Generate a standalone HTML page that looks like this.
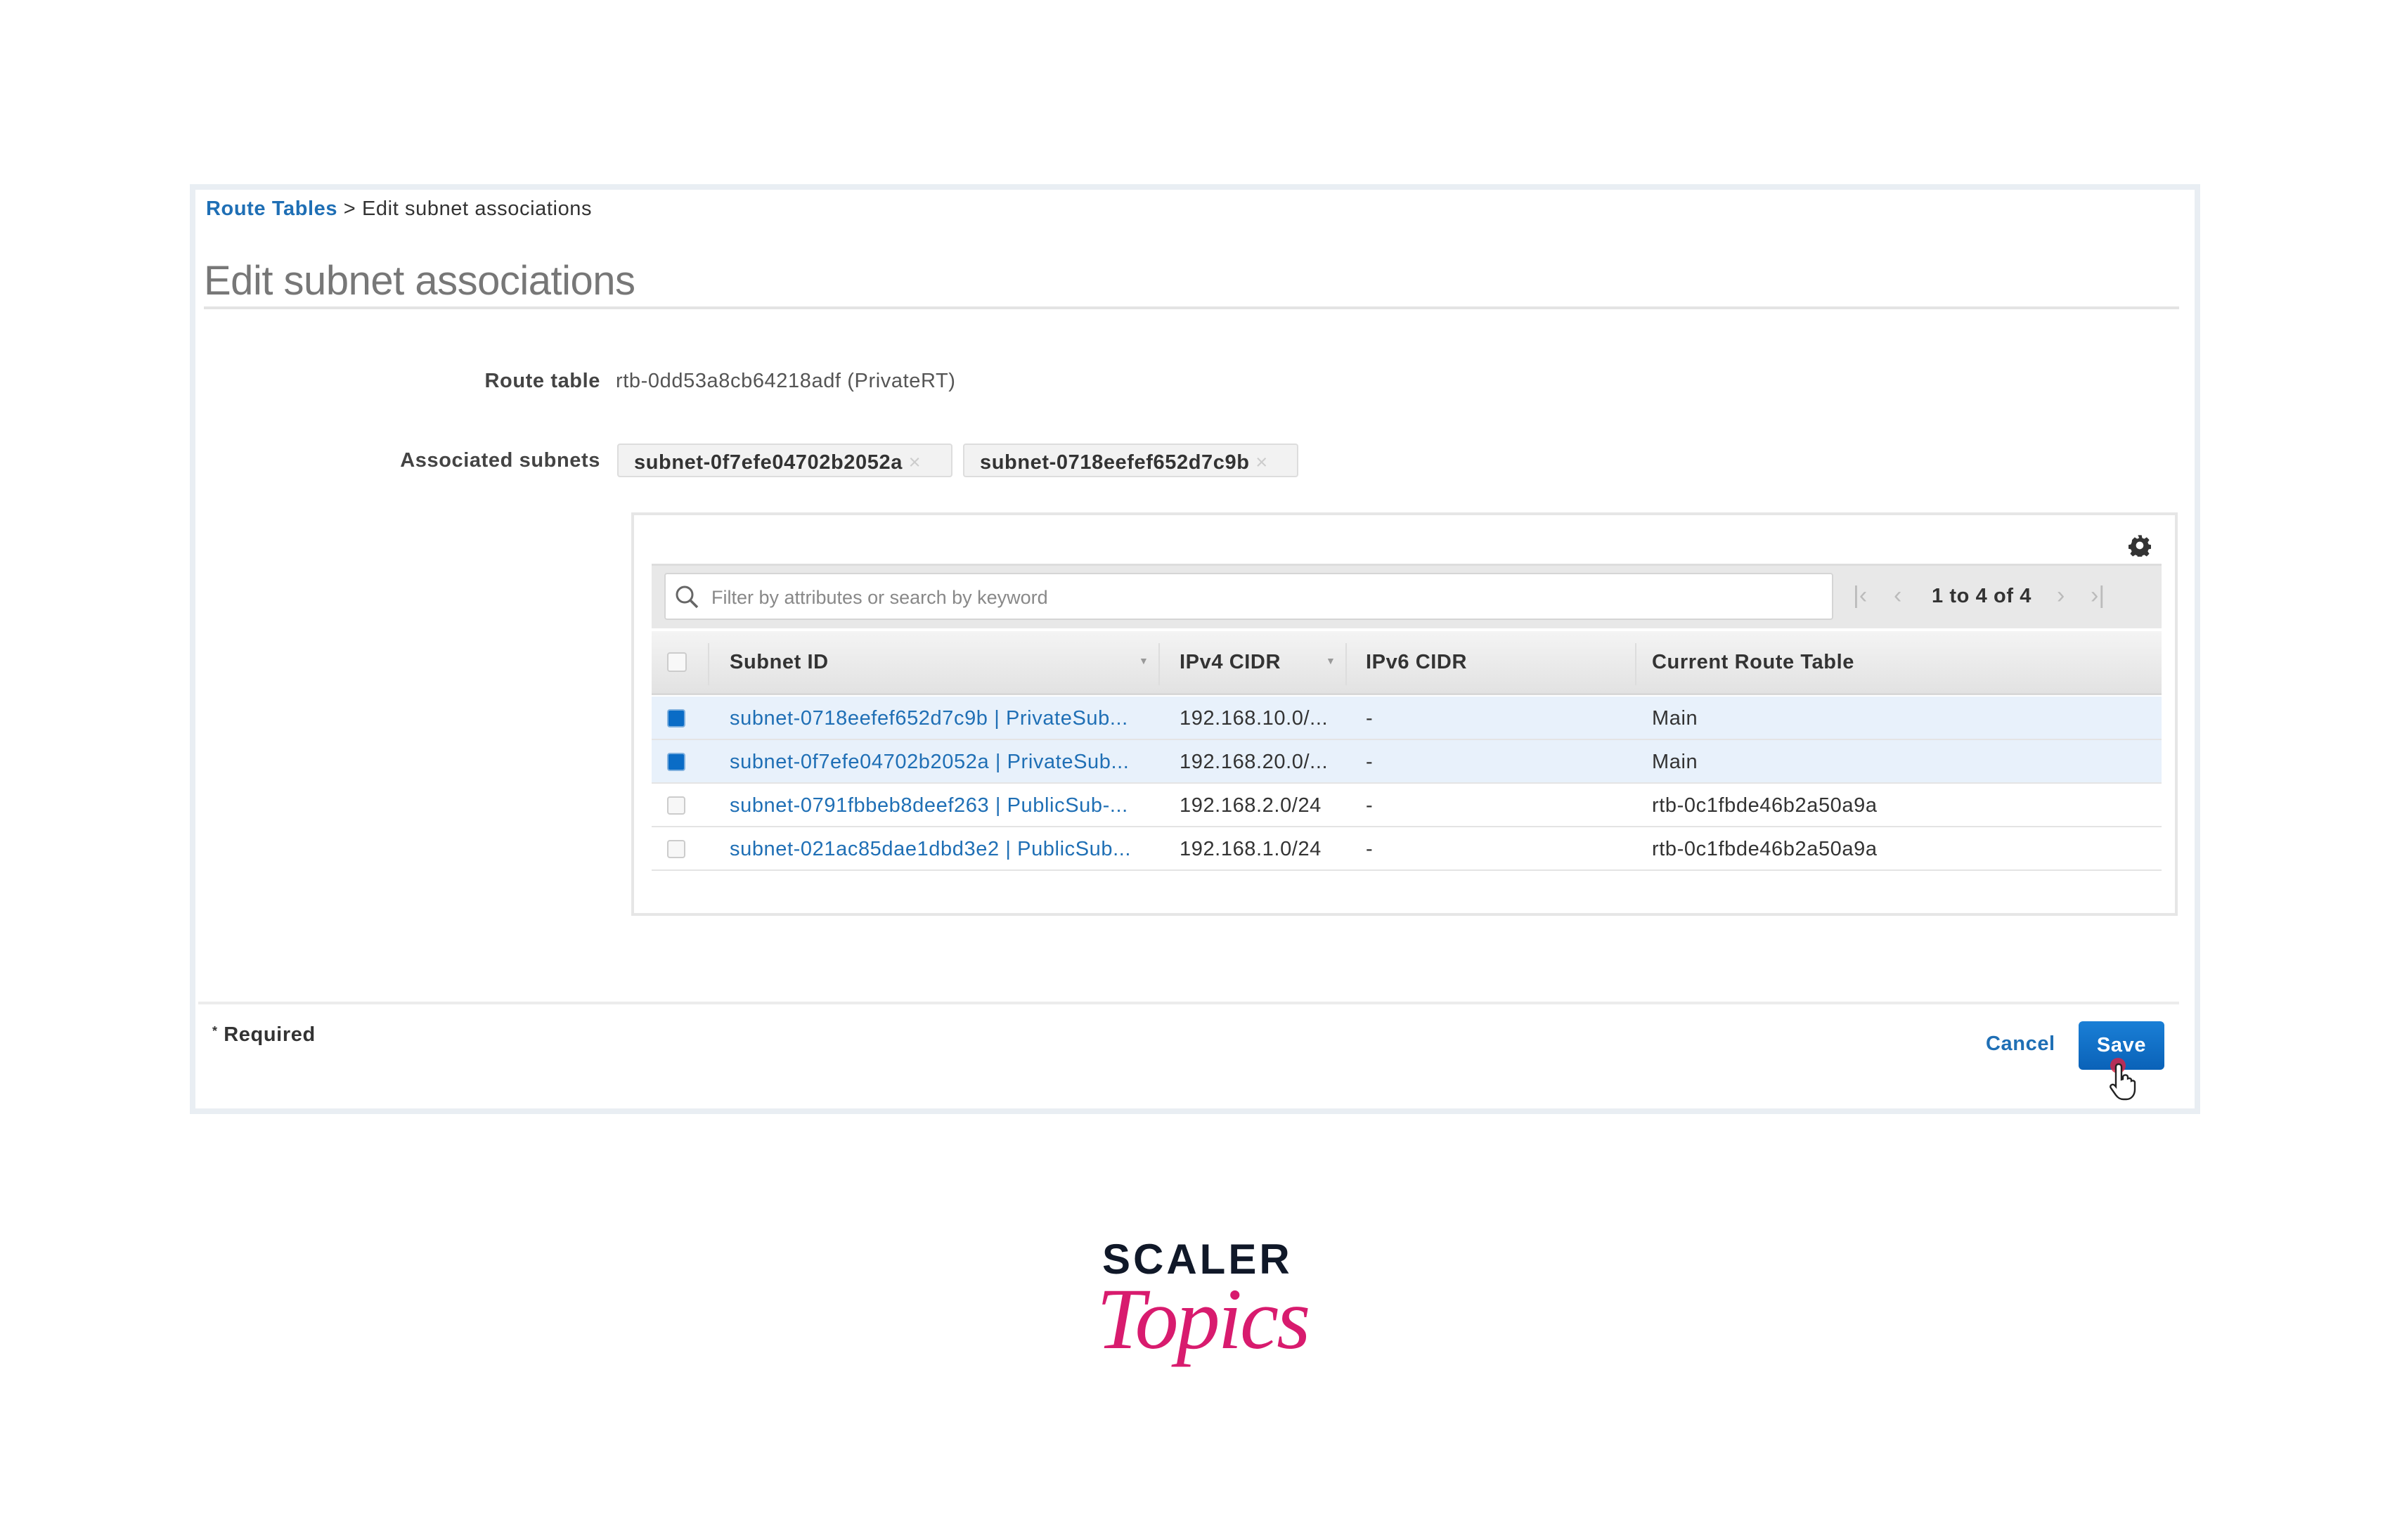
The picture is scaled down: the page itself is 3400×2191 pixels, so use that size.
<!DOCTYPE html>
<html><head><meta charset="utf-8"><style>
*{margin:0;padding:0;box-sizing:border-box}
body{width:3400px;height:2191px;background:#fff;position:relative;overflow:hidden;font-family:"Liberation Sans",Arial,sans-serif;color:#333}
.a{position:absolute;white-space:nowrap}
.t{font-size:29px;letter-spacing:0.6px;line-height:1}
.b{font-weight:bold}
.lnk{color:#1f6fb5}
.row{position:absolute;left:927px;width:2148px;height:62px;border-bottom:2px solid #e4e4e4}
.cb{position:absolute;left:22px;top:18px;width:26px;height:26px;border:2px solid #ccc;border-radius:4px;background:#f7f7f7}
.cb.on{background:#0a6cc6;border-color:#7fb0de}
.c1{position:absolute;left:111px;top:17px}
.c2{position:absolute;left:751px;top:17px}
.c3{position:absolute;left:1016px;top:17px}
.c4{position:absolute;left:1423px;top:17px}
</style></head><body>
<div class="a" style="left:270px;top:262px;width:2860px;height:1323px;border:8px solid #e9eef3;background:#fff"></div>

<div class="a t" style="left:293px;top:283px"><span class="lnk b">Route Tables</span> &gt; Edit subnet associations</div>
<div class="a" style="left:290px;top:366px;font-size:58px;color:#777;letter-spacing:-0.5px">Edit subnet associations</div>
<div class="a" style="left:290px;top:436px;width:2810px;height:4px;background:#e3e3e3"></div>

<div class="a t b" style="left:500px;top:528px;width:354px;text-align:right;color:#444">Route table</div>
<div class="a t" style="left:876px;top:528px;color:#555">rtb-0dd53a8cb64218adf (PrivateRT)</div>

<div class="a t b" style="left:450px;top:641px;width:404px;text-align:right;color:#444">Associated subnets</div>
<div class="a t b" style="left:878px;top:631px;width:477px;height:48px;background:#f2f2f2;border:2px solid #ddd;border-radius:4px;padding:11px 0 0 22px;color:#333">subnet-0f7efe04702b2052a <span style="color:#ccc;font-weight:normal">×</span></div>
<div class="a t b" style="left:1370px;top:631px;width:477px;height:48px;background:#f2f2f2;border:2px solid #ddd;border-radius:4px;padding:11px 0 0 22px;color:#333">subnet-0718eefef652d7c9b <span style="color:#ccc;font-weight:normal">×</span></div>

<div class="a" style="left:898px;top:729px;width:2200px;height:574px;border:4px solid #e6e6e6;background:#fff"></div>
<svg class="a" style="left:3028px;top:760px" width="32" height="32" viewBox="0 0 24 24"><path fill="#333" d="M10 1h4l.6 3 2.2 1 2.6-1.7 2.8 2.8-1.7 2.6 1 2.2 3 .6v4l-3 .6-1 2.2 1.7 2.6-2.8 2.8-2.6-1.7-2.2 1-.6 3h-4l-.6-3-2.2-1-2.6 1.7-2.8-2.8 1.7-2.6-1-2.2-3-.6v-4l3-.6 1-2.2L3.8 6.1l2.8-2.8 2.6 1.7 2.2-1z"/><circle cx="12" cy="12" r="4" fill="#fff"/></svg>

<div class="a" style="left:927px;top:802px;width:2148px;height:92px;background:#e8e8e8;border-top:3px solid #ddd"></div>
<div class="a" style="left:945px;top:815px;width:1663px;height:67px;background:#fff;border:2px solid #d5d5d5;border-radius:4px"></div>
<svg class="a" style="left:958px;top:830px" width="40" height="40" viewBox="0 0 40 40"><circle cx="16" cy="16" r="11" fill="none" stroke="#666" stroke-width="3"/><path d="M24 24l10 10" stroke="#666" stroke-width="3.5"/></svg>
<div class="a" style="left:1012px;top:835px;font-size:27px;color:#888;letter-spacing:0px">Filter by attributes or search by keyword</div>
<div class="a" style="left:2636px;top:828px;font-size:34px;color:#bbb">|&lsaquo;</div>
<div class="a" style="left:2694px;top:828px;font-size:34px;color:#bbb">&lsaquo;</div>
<div class="a t b" style="left:2748px;top:834px;color:#333">1 to 4 of 4</div>
<div class="a" style="left:2926px;top:828px;font-size:34px;color:#bbb">&rsaquo;</div>
<div class="a" style="left:2974px;top:828px;font-size:34px;color:#bbb">&rsaquo;|</div>

<div class="a" style="left:927px;top:898px;width:2148px;height:91px;background:linear-gradient(#f4f4f4,#e2e2e2);border-bottom:3px solid #d8d8d8"></div>
<div class="a" style="left:949px;top:928px;width:28px;height:28px;border:2px solid #ccc;border-radius:4px;background:#f8f8f8"></div>
<div class="a" style="left:1007px;top:915px;width:2px;height:60px;background:#ddd"></div>
<div class="a t b" style="left:1038px;top:928px;color:#333">Subnet ID</div>
<div class="a" style="left:1620px;top:932px;font-size:14px;color:#999">▼</div>
<div class="a" style="left:1648px;top:915px;width:2px;height:60px;background:#ddd"></div>
<div class="a t b" style="left:1678px;top:928px;color:#333">IPv4 CIDR</div>
<div class="a" style="left:1886px;top:932px;font-size:14px;color:#999">▼</div>
<div class="a" style="left:1914px;top:915px;width:2px;height:60px;background:#ddd"></div>
<div class="a t b" style="left:1943px;top:928px;color:#333">IPv6 CIDR</div>
<div class="a" style="left:2326px;top:915px;width:2px;height:60px;background:#ddd"></div>
<div class="a t b" style="left:2350px;top:928px;color:#333">Current Route Table</div>

<div class="row t" style="top:991px;background:#e8f1fb"><div class="cb on"></div><div class="c1 lnk">subnet-0718eefef652d7c9b | PrivateSub...</div><div class="c2">192.168.10.0/...</div><div class="c3">-</div><div class="c4">Main</div></div>
<div class="row t" style="top:1053px;background:#e8f1fb"><div class="cb on"></div><div class="c1 lnk">subnet-0f7efe04702b2052a | PrivateSub...</div><div class="c2">192.168.20.0/...</div><div class="c3">-</div><div class="c4">Main</div></div>
<div class="row t" style="top:1115px"><div class="cb"></div><div class="c1 lnk">subnet-0791fbbeb8deef263 | PublicSub-...</div><div class="c2">192.168.2.0/24</div><div class="c3">-</div><div class="c4">rtb-0c1fbde46b2a50a9a</div></div>
<div class="row t" style="top:1177px"><div class="cb"></div><div class="c1 lnk">subnet-021ac85dae1dbd3e2 | PublicSub...</div><div class="c2">192.168.1.0/24</div><div class="c3">-</div><div class="c4">rtb-0c1fbde46b2a50a9a</div></div>

<div class="a" style="left:282px;top:1425px;width:2818px;height:4px;background:#ececec"></div>
<div class="a t b" style="left:302px;top:1458px;color:#333"><span style="font-size:18px;vertical-align:top">*</span> Required</div>
<div class="a t b lnk" style="left:2825px;top:1471px">Cancel</div>
<div class="a t b" style="left:2957px;top:1453px;width:122px;height:69px;background:linear-gradient(#1a7fd6,#0a62b8);border-radius:6px;color:#fff;text-align:center;padding-top:20px">Save</div>
<div class="a" style="left:3002px;top:1505px;width:22px;height:22px;border-radius:50%;background:#e02040;opacity:.8"></div>
<svg class="a" style="left:2998px;top:1510px" width="50" height="60" viewBox="0 0 25 30"><path d="M8 2c1.2 0 2 .8 2 2v9l1-.3v-1.4c0-1 .8-1.6 1.8-1.6s1.7.6 1.7 1.6v1l.5-.2c1-.3 2 .3 2 1.3v.6l.5-.2c1-.3 2 .3 2 1.3V20c0 4-2.5 7-6 7h-2c-2.5 0-4-1-5.5-3L2.5 19c-.8-1 -.2-2.3 1-2.5.7-.1 1.3.2 1.8.7L6 18V4c0-1.2.8-2 2-2z" fill="#fff" stroke="#222" stroke-width="1.2"/></svg>

<div class="a" style="left:1568px;top:1762px;font-size:60px;font-weight:bold;color:#101828;letter-spacing:4px;line-height:1">SCALER</div>
<div class="a" style="left:1560px;top:1815px;font-family:'Liberation Serif',serif;font-style:italic;font-size:124px;color:#d81b6e;line-height:1;letter-spacing:-3px">Topics</div>
</body></html>
